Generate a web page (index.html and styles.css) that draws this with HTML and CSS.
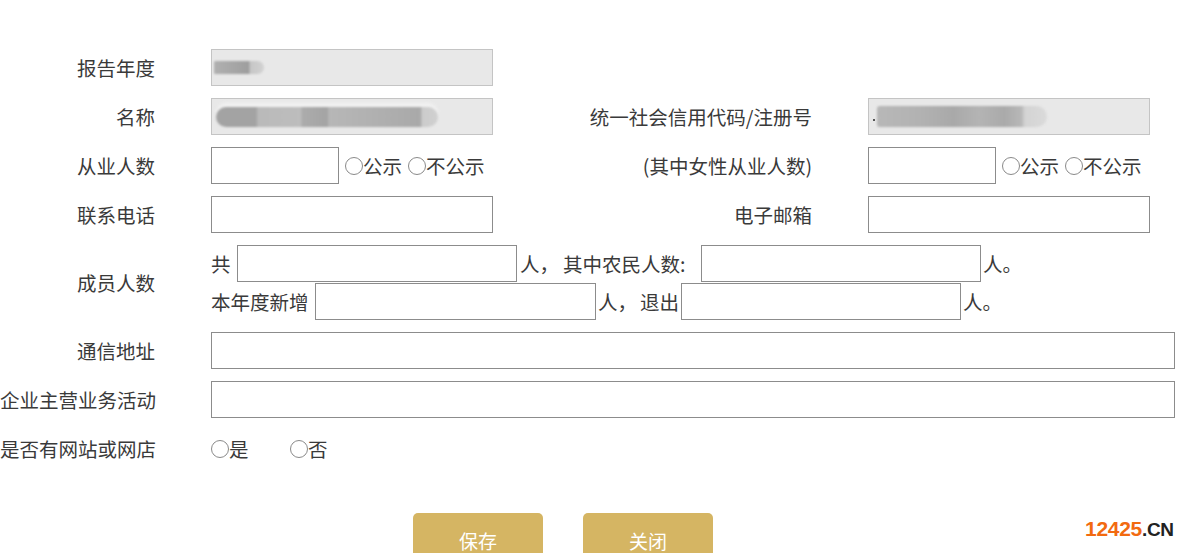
FILE: index.html
```html
<!DOCTYPE html>
<html lang="zh-CN">
<head>
<meta charset="utf-8">
<title>年报</title>
<link rel="stylesheet" href="styles.css">
</head>
<body>
<div class="form">
  <div class="row">
    <div class="half">
      <div class="lbl">报告年度</div>
      <div class="field ro w282"><span class="blur b1"></span></div>
    </div>
  </div>
  <div class="row">
    <div class="half">
      <div class="lbl">名称</div>
      <div class="field ro w282"><span class="blur b2"></span></div>
    </div>
    <div class="lbl-r">统一社会信用代码/注册号</div>
    <div class="field ro w282"><span class="dot"></span><span class="blur b3"></span></div>
  </div>
  <div class="row">
    <div class="half">
      <div class="lbl">从业人数</div>
      <input class="field w128" type="text">
      <div class="radios">
        <span class="radio"><span class="circle"></span>公示</span>
        <span class="radio"><span class="circle"></span>不公示</span>
      </div>
    </div>
    <div class="lbl-r">(其中女性从业人数)</div>
    <input class="field w128" type="text">
    <div class="radios">
      <span class="radio"><span class="circle"></span>公示</span>
      <span class="radio"><span class="circle"></span>不公示</span>
    </div>
  </div>
  <div class="row">
    <div class="half">
      <div class="lbl">联系电话</div>
      <input class="field w282" type="text">
    </div>
    <div class="lbl-r">电子邮箱</div>
    <input class="field w282" type="text">
  </div>
  <div class="row members">
    <div class="lbl">成员人数</div>
    <div class="lines">
      <div class="line">
        <span class="t t-gong">共</span>
        <input class="field w280" type="text">
        <span class="t t-ren1">人，</span>
        <span class="t t-nong">其中农民人数:</span>
        <input class="field w280" type="text">
        <span class="t t-end">人。</span>
      </div>
      <div class="line">
        <span class="t t-new">本年度新增</span>
        <input class="field w281" type="text">
        <span class="t t-ren2">人，</span>
        <span class="t t-out">退出</span>
        <input class="field w280" type="text">
        <span class="t t-end">人。</span>
      </div>
    </div>
  </div>
  <div class="row">
    <div class="lbl">通信地址</div>
    <input class="field wfull" type="text">
  </div>
  <div class="row">
    <div class="lbl">企业主营业务活动</div>
    <input class="field wfull" type="text">
  </div>
  <div class="row">
    <div class="lbl">是否有网站或网店</div>
    <div class="yesno">
      <span class="radio r-yes"><span class="circle"></span>是</span>
      <span class="radio"><span class="circle"></span>否</span>
    </div>
  </div>
  <div class="buttons">
    <button class="btn" type="button">保存</button>
    <button class="btn" type="button">关闭</button>
  </div>
</div>
<div class="mark"><span class="num">12425</span><span class="cn">.CN</span></div>
</body>
</html>
```

FILE: styles.css
```css
html, body {
  margin: 0;
  padding: 0;
  background: #ffffff;
}
body {
  font-family: "Noto Sans CJK SC", "Microsoft YaHei", sans-serif;
  font-size: 19.5px;
  color: #3a3a3a;
  width: 1189px;
  height: 553px;
  overflow: hidden;
  position: relative;
}
.form {
  padding-top: 49px;
}
.row {
  display: flex;
  align-items: center;
  height: 37px;
  margin-bottom: 12px;
}
.half {
  flex: none;
  width: 493px;
  display: flex;
  align-items: center;
}
.lbl {
  flex: none;
  width: 155px;
  margin-right: 56px;
  text-align: right;
  white-space: nowrap;
  line-height: 24px;
}
.lbl-r {
  flex: none;
  width: 319px;
  margin-right: 56px;
  text-align: right;
  white-space: nowrap;
  line-height: 24px;
}
.field {
  box-sizing: border-box;
  height: 37px;
  margin: 0;
  padding: 0 4px;
  border: 1px solid #8c8c8c;
  background: #ffffff;
  font: inherit;
  flex: none;
  outline: none;
}
.ro {
  background: #e8e8e8;
  border-color: #c4c4c4;
  display: flex;
  align-items: center;
  padding: 0 0 0 2px;
  overflow: hidden;
}
.w282 { width: 282px; }
.w281 { width: 281px; }
.w280 { width: 280px; }
.w128 { width: 128px; }
.wfull { width: 964px; }

.blur {
  display: block;
  filter: blur(1.2px);
  border-radius: 2px 10px 10px 2px;
}
.b1 {
  width: 50px;
  height: 13px;
  background: linear-gradient(90deg, #b0b0b0 0, #a6a6a6 40%, #9e9e9e 70%, #c6c6c6 72%, #d2d2d2 100%);
}
.b2 {
  width: 222px;
  height: 20px;
  margin-left: 2px;
  border-radius: 10px;
  background: linear-gradient(90deg, #a3a3a3 0, #a3a3a3 18%, #bababa 19%, #bdbdbd 38%, #acacac 39%, #a4a4a4 50%, #b7b7b7 51%, #b0b0b0 72%, #a9a9a9 92%, #cccccc 93%, #d0d0d0 100%);
  box-shadow: 0 -4px 3px #f2f2f2;
}
.dot {
  display: block;
  width: 2px;
  height: 2px;
  background: #555;
  margin: 6px 2px 0 2px;
}
.b3 {
  width: 170px;
  height: 21px;
  border-radius: 3px 11px 11px 3px;
  background: linear-gradient(90deg, #b8b8b8 0, #b2b2b2 25%, #a9a9a9 45%, #b4b4b4 60%, #aaaaaa 75%, #b8b8b8 85%, #d4d4d4 87%, #dadada 100%);
}

.radios {
  flex: none;
  display: flex;
  align-items: center;
  margin-left: 6px;
  gap: 6px;
  line-height: 24px;
}
.radio {
  display: inline-flex;
  align-items: center;
  white-space: nowrap;
}
.circle {
  display: inline-block;
  box-sizing: border-box;
  width: 18px;
  height: 18px;
  border: 1.5px solid #8a8a8a;
  border-radius: 50%;
  background: #ffffff;
  margin-right: 0;
}

.members {
  height: 75px;
}
.lines {
  display: flex;
  flex-direction: column;
  gap: 1px;
}
.line {
  display: flex;
  align-items: center;
  height: 37px;
  white-space: nowrap;
}
.t {
  flex: none;
  line-height: 24px;
}
.t-gong { width: 26px; }
.t-ren1 { width: 43px; margin-left: 3px; }
.t-nong { width: 138px; }
.t-end { margin-left: 2px; }
.t-new { width: 104px; }
.t-ren2 { width: 42px; margin-left: 2px; }
.t-out { width: 41px; }

.yesno {
  display: flex;
  align-items: center;
  line-height: 24px;
}
.r-yes {
  width: 79px;
}

.buttons {
  width: 1126px;
  display: flex;
  justify-content: center;
  gap: 40px;
  margin-top: 46px;
}
.btn {
  width: 130px;
  height: 54px;
  border: none;
  border-radius: 5px;
  background: #d5b563;
  color: #ffffff;
  font: inherit;
  font-size: 19px;
  padding: 0;
}

.mark {
  position: absolute;
  left: 1085px;
  top: 516px;
  font-family: "Liberation Sans", Arial, sans-serif;
  font-weight: bold;
  font-size: 21px;
  line-height: 26px;
  letter-spacing: -0.3px;
}
.mark .num { color: #f26a10; }
.mark .cn { color: #222222; font-size: 19px; }
```
